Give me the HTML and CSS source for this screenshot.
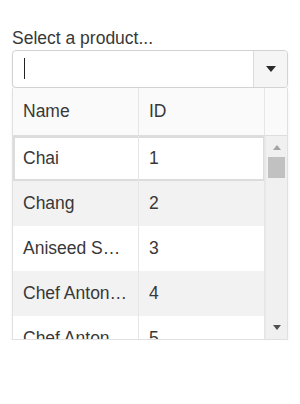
FILE: index.html
```html
<!DOCTYPE html>
<html lang="en">
<head>
  <meta charset="UTF-8">
  <title>Product ComboBox</title>
  <link rel="stylesheet" href="styles.css">
</head>
<body>
  <div class="demo">
    <label class="field-label" for="products">Select a product...</label>
    <div class="combo" id="products">
      <div class="combo-input"><span class="caret"></span></div>
      <span class="combo-arrow"><span class="tri-down"></span></span>
    </div>

    <div class="popup">
      <div class="grid-head">
        <div class="cell">Name</div>
        <div class="cell">ID</div>
        <div class="cell cell-gap"></div>
      </div>
      <div class="grid-body">
        <ul class="rows">
          <li class="row focused"><span class="cell">Chai</span><span class="cell">1</span></li>
          <li class="row"><span class="cell">Chang</span><span class="cell">2</span></li>
          <li class="row"><span class="cell">Aniseed Syrup</span><span class="cell">3</span></li>
          <li class="row"><span class="cell">Chef Anton's Cajun Seasoning</span><span class="cell">4</span></li>
          <li class="row"><span class="cell">Chef Anton's Gumbo Mix</span><span class="cell">5</span></li>
        </ul>
        <div class="scrollbar">
          <span class="sb-btn sb-up"><span class="tri-up"></span></span>
          <span class="sb-thumb"></span>
          <span class="sb-btn sb-down"><span class="tri-down dark"></span></span>
        </div>
      </div>
    </div>
  </div>
</body>
</html>
```

FILE: styles.css
```css
* {
  box-sizing: border-box;
}
body {
  margin: 0;
  font-family: "Liberation Sans", Arial, sans-serif;
  font-size: 17.5px;
  color: #383838;
  background-color: #fff;
}
.demo {
  padding: 28px 12px 0;
}
.field-label {
  display: block;
  line-height: 20px;
  margin-bottom: 2px;
}

/* combobox */
.combo {
  display: flex;
  width: 276px;
  height: 38px;
  border: 1px solid #d2d2d2;
  border-radius: 4px;
  background-color: #fff;
  box-shadow: 0 1px 2px rgba(0,0,0,0.08);
  overflow: hidden;
}
.combo-input {
  flex: 1;
  display: flex;
  align-items: center;
  padding-left: 11px;
}
.caret {
  width: 1px;
  height: 21px;
  margin-top: -1px;
  background-color: #222;
}
.combo-arrow {
  width: 34px;
  display: flex;
  align-items: center;
  justify-content: center;
  border-left: 1px solid #dcdcdc;
  background-color: #f5f5f5;
}
.tri-down {
  width: 0;
  height: 0;
  border-left: 5px solid transparent;
  border-right: 5px solid transparent;
  border-top: 6px solid #2b2b2b;
}
.tri-down.dark {
  border-left-width: 4.5px;
  border-right-width: 4.5px;
  border-top: 5px solid #505050;
}
.tri-up {
  width: 0;
  height: 0;
  border-left: 4.5px solid transparent;
  border-right: 4.5px solid transparent;
  border-bottom: 5px solid #a3a3a3;
}

/* dropdown list */
.popup {
  width: 276px;
  border: 1px solid #e0e0e0;
  border-top: none;
  background-color: #fff;
  box-shadow: 0 2px 3px rgba(0,0,0,0.06);
}
.cell {
  padding: 0 9.5px 0 10px;
  border-right: 1px solid #e6e6e6;
  white-space: nowrap;
  overflow: hidden;
  text-overflow: ellipsis;
}
.grid-head {
  display: grid;
  grid-template-columns: 126px 126px 22px;
  height: 48px;
  background-color: #fafafa;
  border-bottom: 1px solid #dedede;
}
.grid-head .cell {
  display: flex;
  align-items: center;
}
.grid-head .cell-gap {
  border-right: none;
}
.grid-body {
  display: flex;
  height: 203px;
  overflow: hidden;
}
.rows {
  list-style: none;
  margin: 0;
  padding: 0;
  width: 252px;
}
.row {
  display: grid;
  grid-template-columns: 126px 126px;
  height: 45px;
  line-height: 45px;
}
.row:nth-child(even) {
  background-color: #f2f2f2;
}
.row.focused {
  box-shadow: inset 0 0 0 2px #dcdcdc;
}

/* scrollbar */
.scrollbar {
  width: 22px;
  display: flex;
  flex-direction: column;
  align-items: center;
  border-left: 1px solid #e8e8e8;
  background-color: #f0f0f0;
}
.sb-btn {
  display: flex;
  justify-content: center;
  width: 100%;
}
.sb-up {
  height: 21px;
  padding-top: 9px;
}
.sb-thumb {
  width: 17px;
  height: 21px;
  background-color: #c1c1c1;
}
.sb-down {
  margin-top: auto;
  padding-bottom: 9px;
}
```
